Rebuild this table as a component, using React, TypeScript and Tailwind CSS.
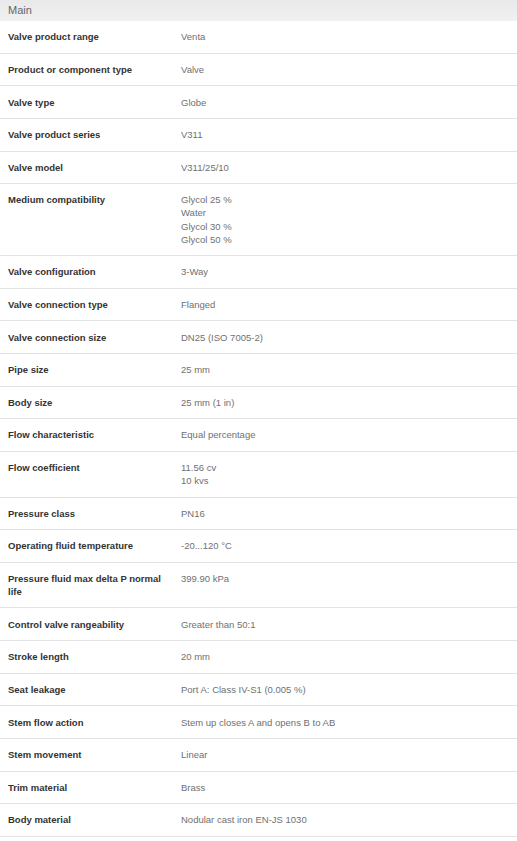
const rows: [string, string[]][] = [
  ["Valve product range", ["Venta"]],
  ["Product or component type", ["Valve"]],
  ["Valve type", ["Globe"]],
  ["Valve product series", ["V311"]],
  ["Valve model", ["V311/25/10"]],
  ["Medium compatibility", ["Glycol 25 %", "Water", "Glycol 30 %", "Glycol 50 %"]],
  ["Valve configuration", ["3-Way"]],
  ["Valve connection type", ["Flanged"]],
  ["Valve connection size", ["DN25 (ISO 7005-2)"]],
  ["Pipe size", ["25 mm"]],
  ["Body size", ["25 mm (1 in)"]],
  ["Flow characteristic", ["Equal percentage"]],
  ["Flow coefficient", ["11.56 cv", "10 kvs"]],
  ["Pressure class", ["PN16"]],
  ["Operating fluid temperature", ["-20...120 °C"]],
  ["Pressure fluid max delta P normal life", ["399.90 kPa"]],
  ["Control valve rangeability", ["Greater than 50:1"]],
  ["Stroke length", ["20 mm"]],
  ["Seat leakage", ["Port A: Class IV-S1 (0.005 %)"]],
  ["Stem flow action", ["Stem up closes A and opens B to AB"]],
  ["Stem movement", ["Linear"]],
  ["Trim material", ["Brass"]],
  ["Body material", ["Nodular cast iron EN-JS 1030"]],
];

export default function App() {
  return (
    <div className="w-[517px] bg-white font-['Liberation_Sans',Arial,sans-serif]">
      <div className="h-[21px] bg-gradient-to-b from-[#e9e9e9] to-[#f1f1f1] pl-2 text-[11px] leading-[21px] text-[#666]">
        Main
      </div>
      {rows.map(([label, values]) => (
        <div
          key={label}
          className="flex border-b border-[#e3e3e3] py-[9.28px] text-[9.5px] leading-[13.1px]"
        >
          <div className="w-[181px] shrink-0 pl-2 pr-4 font-bold text-[#333]">{label}</div>
          <div className="flex flex-col text-[#707070]">
            {values.map((v) => (
              <span key={v}>{v}</span>
            ))}
          </div>
        </div>
      ))}
    </div>
  );
}
